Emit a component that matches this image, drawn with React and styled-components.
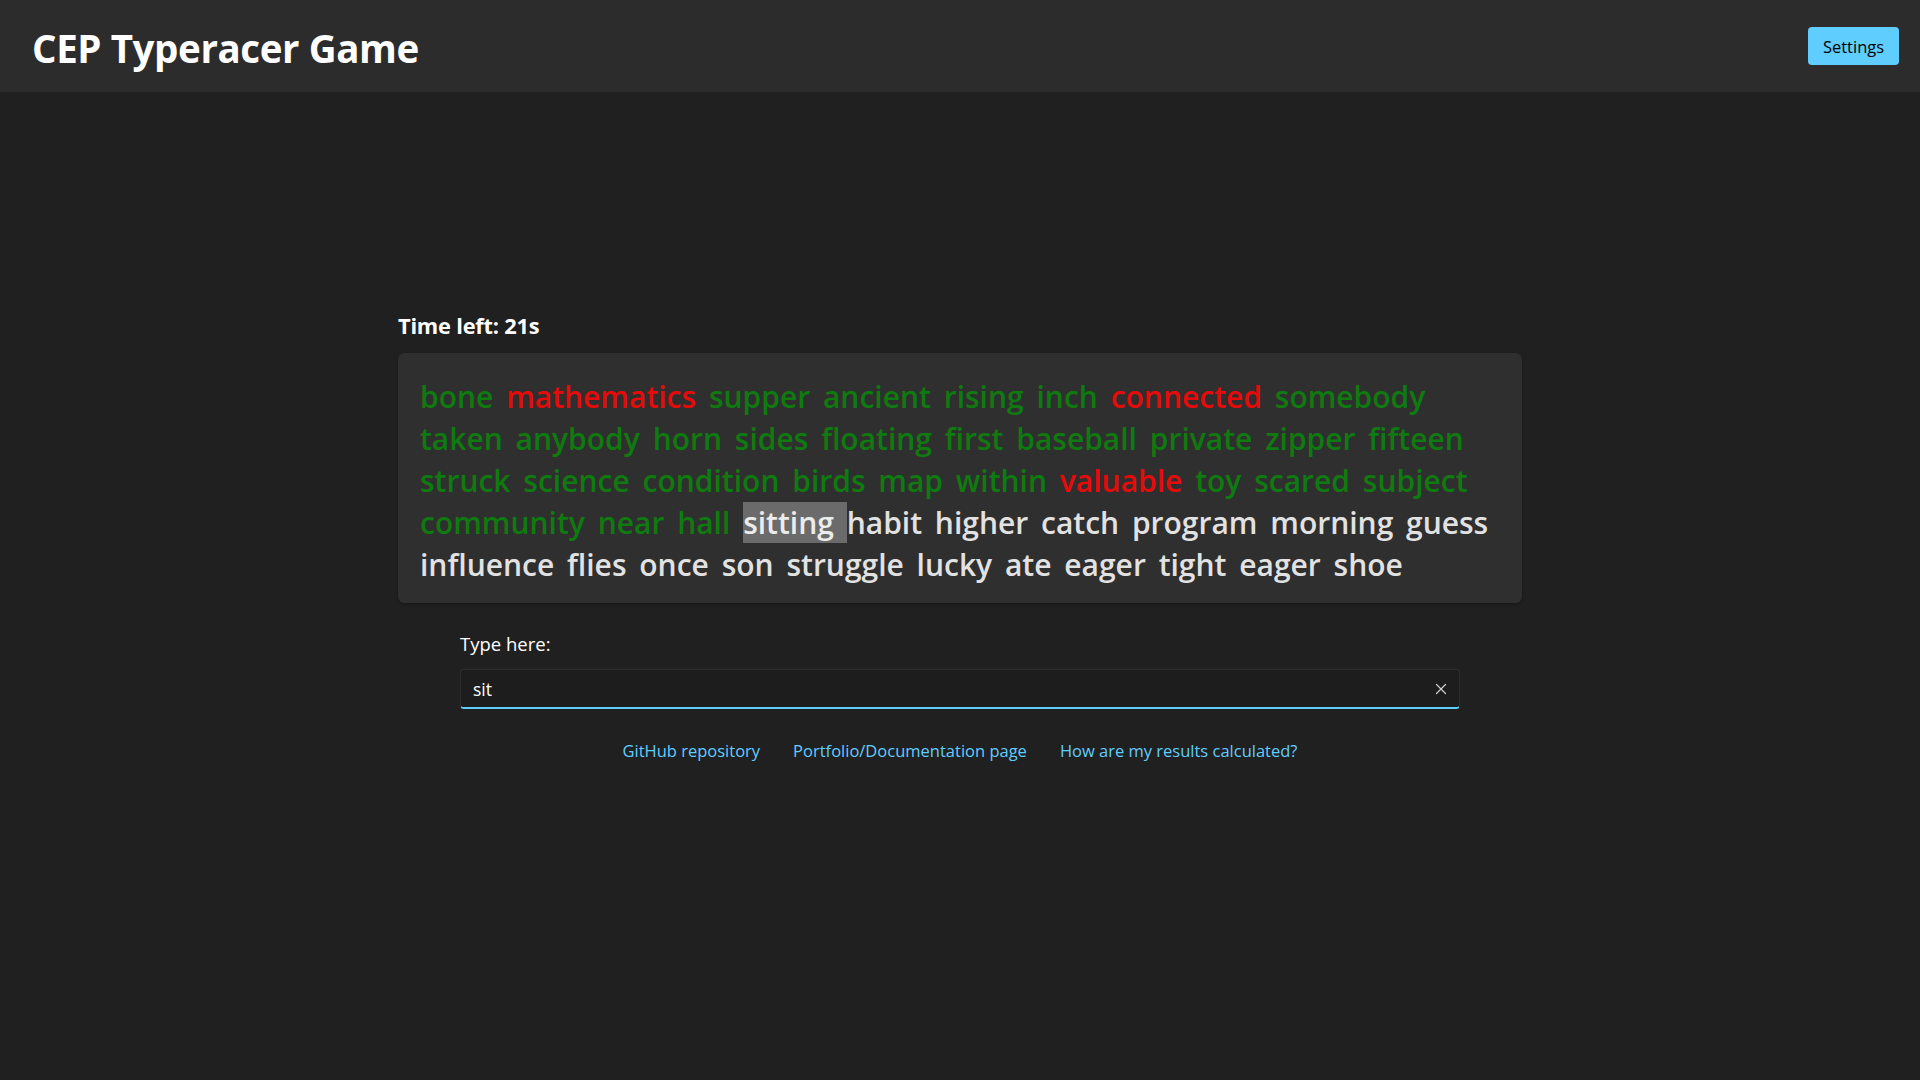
import React, { useState } from "react";
import styled, { createGlobalStyle } from "styled-components";

const GlobalStyle = createGlobalStyle`
  html, body {
    margin: 0;
    padding: 0;
    background: #202020;
    color: #ffffff;
    font-family: "Open Sans", "Noto Sans", sans-serif;
  }
  * { box-sizing: border-box; }
`;

const Page = styled.div`
  min-height: 1080px;
  background: #202020;
  display: flex;
  flex-direction: column;
`;

const Header = styled.header`
  height: 92px;
  background: #2c2c2c;
  display: flex;
  align-items: center;
  justify-content: space-between;
  padding: 0 21px 0 32px;
`;

const Title = styled.h1`
  margin: 0;
  font-size: 38.5px;
  font-weight: 700;
  letter-spacing: -0.4px;
  color: #ffffff;
  padding-top: 4px;
`;

const SettingsButton = styled.button`
  width: 91px;
  height: 38px;
  border: none;
  border-radius: 4px;
  background: #60cdff;
  color: #000000;
  font-family: "Open Sans", sans-serif;
  font-size: 16.5px;
  cursor: pointer;
`;

const Main = styled.main`
  display: flex;
  flex-direction: column;
  align-items: center;
  padding-top: 219px;
`;

const Game = styled.section`
  width: 1124px;
  display: flex;
  flex-direction: column;
`;

const Timer = styled.div`
  font-size: 21.8px;
  font-weight: 700;
  line-height: 30px;
  margin-bottom: 12px;
  letter-spacing: -0.2px;
`;

const WordBox = styled.div`
  background: #2f2f2f;
  border-radius: 6px;
  padding: 23px 20px 17px 22px;
  box-shadow: 0 1px 3px rgba(0, 0, 0, 0.35);
  font-size: 30px;
  font-weight: 600;
  line-height: 42px;
  word-spacing: 5px;
`;

const colors = {
  correct: "#0f7a0f",
  wrong: "#e60b0b",
  current: "#ececec",
  pending: "#e2e2e2",
};

const Word = styled.span`
  color: ${(p) => colors[p.$status]};
  background: ${(p) => (p.$status === "current" ? "#6b6b6b" : "transparent")};
`;

const Form = styled.div`
  width: 1000px;
  margin-top: 29px;
  display: flex;
  flex-direction: column;
`;

const Label = styled.label`
  font-size: 18.5px;
  line-height: 24px;
  color: #ffffff;
  margin-bottom: 13px;
`;

const InputWrap = styled.div`
  position: relative;
  height: 40px;
  background: #1d1d1d;
  border: 1px solid #2e2e2e;
  border-bottom: 2px solid #60cdff;
  border-radius: 4px;
  display: flex;
  align-items: center;
`;

const Input = styled.input`
  flex: 1;
  height: 100%;
  background: transparent;
  border: none;
  outline: none;
  color: #ffffff;
  font-family: "Open Sans", sans-serif;
  font-size: 17.5px;
  padding: 0 12px;
  caret-color: #ffffff;
`;

const ClearButton = styled.button`
  width: 36px;
  height: 100%;
  border: none;
  background: transparent;
  display: flex;
  align-items: center;
  justify-content: center;
  padding: 0;
  margin-right: 0;
  cursor: pointer;
`;

const Links = styled.nav`
  display: flex;
  justify-content: center;
  gap: 33px;
  margin-top: 30px;
`;

const Link = styled.a`
  color: #60cdff;
  font-size: 16.5px;
  line-height: 24px;
  text-decoration: none;
`;

const words = [
  ["bone", "correct"], ["mathematics", "wrong"], ["supper", "correct"], ["ancient", "correct"],
  ["rising", "correct"], ["inch", "correct"], ["connected", "wrong"], ["somebody", "correct"],
  ["taken", "correct"], ["anybody", "correct"], ["horn", "correct"], ["sides", "correct"],
  ["floating", "correct"], ["first", "correct"], ["baseball", "correct"], ["private", "correct"],
  ["zipper", "correct"], ["fifteen", "correct"], ["struck", "correct"], ["science", "correct"],
  ["condition", "correct"], ["birds", "correct"], ["map", "correct"], ["within", "correct"],
  ["valuable", "wrong"], ["toy", "correct"], ["scared", "correct"], ["subject", "correct"],
  ["community", "correct"], ["near", "correct"], ["hall", "correct"], ["sitting", "current"],
  ["habit", "pending"], ["higher", "pending"], ["catch", "pending"], ["program", "pending"],
  ["morning", "pending"], ["guess", "pending"], ["influence", "pending"], ["flies", "pending"],
  ["once", "pending"], ["son", "pending"], ["struggle", "pending"], ["lucky", "pending"],
  ["ate", "pending"], ["eager", "pending"], ["tight", "pending"], ["eager", "pending"],
  ["shoe", "pending"],
];

export default function App() {
  const [value, setValue] = useState("sit");
  return (
    <Page>
      <GlobalStyle />
      <Header>
        <Title>CEP Typeracer Game</Title>
        <SettingsButton>Settings</SettingsButton>
      </Header>
      <Main>
        <Game>
          <Timer>Time left: 21s</Timer>
          <WordBox>
            {words.map(([w, s], i) => (
              <Word key={i} $status={s}>{w + " "}</Word>
            ))}
          </WordBox>
        </Game>
        <Form>
          <Label htmlFor="typing">Type here:</Label>
          <InputWrap>
            <Input id="typing" value={value} autoFocus onChange={(e) => setValue(e.target.value)} />
            <ClearButton aria-label="Clear" onClick={() => setValue("")}>
              <svg width="12" height="12" viewBox="0 0 12 12">
                <path d="M1.5 1.5 L10.5 10.5 M10.5 1.5 L1.5 10.5" stroke="#cfcfcf" strokeWidth="1.2" strokeLinecap="round" />
              </svg>
            </ClearButton>
          </InputWrap>
        </Form>
        <Links>
          <Link href="#">GitHub repository</Link>
          <Link href="#">Portfolio/Documentation page</Link>
          <Link href="#">How are my results calculated?</Link>
        </Links>
      </Main>
    </Page>
  );
}
